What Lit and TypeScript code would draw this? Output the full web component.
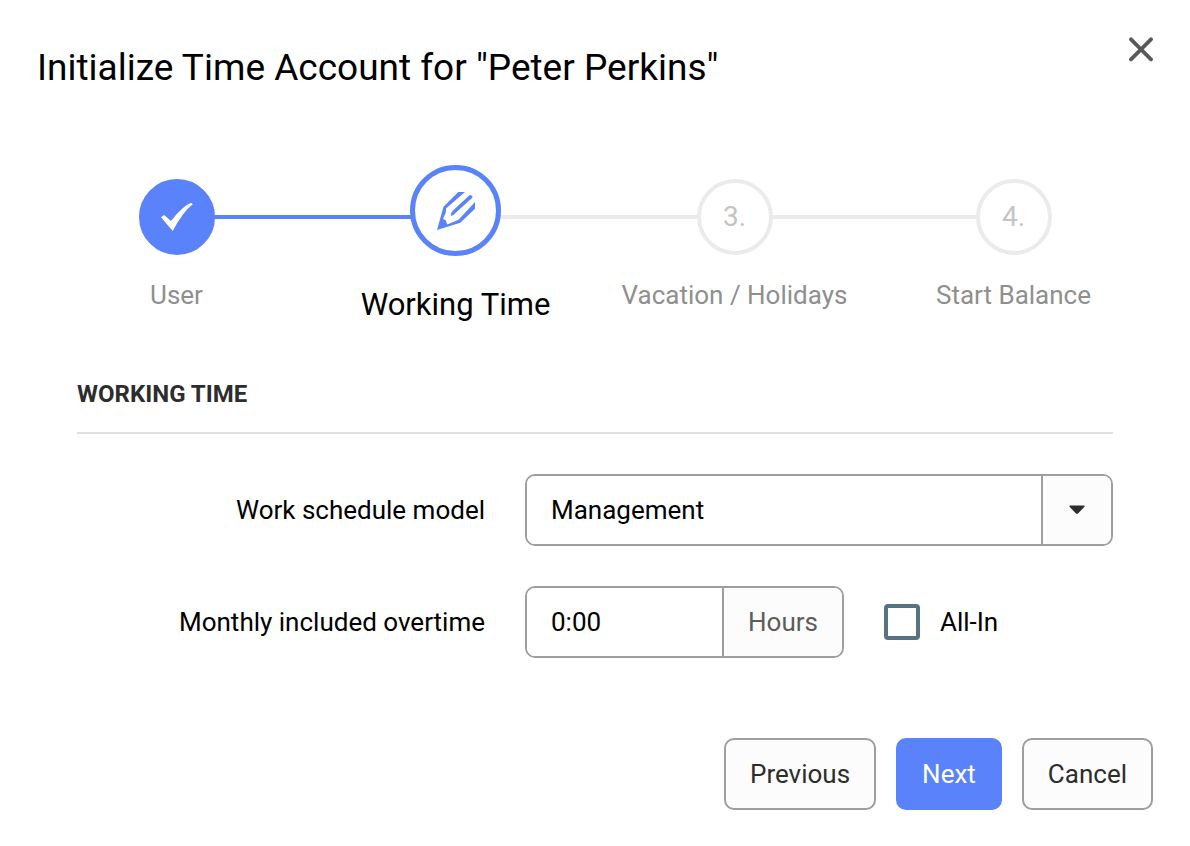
import { LitElement, html, css, svg, nothing } from "lit";
import { customElement, property, state } from "lit/decorators.js";
import { classMap } from "lit/directives/class-map.js";

type StepState = "done" | "active" | "open";

interface Step {
  label: string;
  state: StepState;
}

const checkIcon = svg`
  <path d="M0 14.300 L3 12 L10 18 Q15 11 22 5 Q28 0 30.500 0 L31.800 1.200 Q27 5 22.300 11 Q17 18 11.700 28 Z" fill="currentColor"></path>
`;

const pencilIcon = svg`
  <path fill="currentColor"
    d="M0 38 L6.500 14.700 L21.300 0 L28 0 L9.200 16.300 L8.700 20.700 L6 27 L8.700 28.300 L10.300 32.500 L21.500 27.800 L38 10 L38 16.700 L23.300 30.700 Z"></path>
  <path fill="currentColor"
    d="M32.700 3 L35.300 3.700 L35.300 5.700 L16.300 23 L14 24 L14 21.300 L16.300 18.300 Z"></path>
`;

@customElement("step-progress")
export class StepProgress extends LitElement {
  @property({ attribute: false }) steps: Step[] = [];

  static styles = css`
    :host {
      display: block;
    }
    .steps {
      display: grid;
      grid-auto-flow: column;
      grid-auto-columns: minmax(0, 1fr);
      margin: 0;
      padding: 0;
      list-style: none;
    }
    .head {
      display: flex;
      align-items: flex-end;
      height: 92px;
    }
    .line {
      flex: 1;
      height: 4px;
      margin: 0 -2px 38px 0;
      background: #ebebeb;
    }
    .line.after {
      margin: 0 0 38px -2px;
    }
    .line.reached {
      background: #5a82fa;
    }
    .line.hidden {
      visibility: hidden;
    }
    .marker {
      position: relative;
      display: flex;
      align-items: center;
      justify-content: center;
      box-sizing: border-box;
      width: 76px;
      height: 76px;
      margin-bottom: 2px;
      border: 4px solid #ebebeb;
      border-radius: 50%;
      background: #fff;
      color: #c4c4c4;
      font-size: 28px;
    }
    .done .marker {
      border-color: #5a82fa;
      background: #5a82fa;
      color: #fff;
    }
    .active .marker {
      width: 91px;
      height: 91px;
      margin-bottom: 1px;
      border-width: 5px;
      border-color: #5a82fa;
      color: #5a82fa;
    }
    .label {
      margin-top: 22px;
      color: #8f8f8f;
      font-size: 26px;
      line-height: 32px;
      text-align: center;
    }
    .active .label {
      margin-top: 29px;
      color: #000;
      font-size: 31px;
      line-height: 38px;
    }
  `;

  private marker(step: Step, index: number) {
    if (step.state === "done") {
      return html`<svg width="32" height="28" viewBox="0 0 32 28" aria-hidden="true">${checkIcon}</svg>`;
    }
    if (step.state === "active") {
      return html`<svg width="38" height="38" viewBox="0 0 38 38" aria-hidden="true">${pencilIcon}</svg>`;
    }
    return `${index + 1}.`;
  }

  render() {
    const last = this.steps.length - 1;
    return html`
      <ol class="steps">
        ${this.steps.map(
          (step, i) => html`
            <li
              class=${classMap({ [step.state]: true })}
              aria-current=${step.state === "active" ? "step" : nothing}
            >
              <div class="head">
                <span class=${classMap({ line: true, hidden: i === 0, reached: step.state !== "open" })}></span>
                <span class="marker">${this.marker(step, i)}</span>
                <span class=${classMap({ line: true, after: true, hidden: i === last, reached: step.state === "done" })}></span>
              </div>
              <div class="label">${step.label}</div>
            </li>
          `
        )}
      </ol>
    `;
  }
}

@customElement("app-root")
export class AppRoot extends LitElement {
  @state() private steps: Step[] = [
    { label: "User", state: "done" },
    { label: "Working Time", state: "active" },
    { label: "Vacation / Holidays", state: "open" },
    { label: "Start Balance", state: "open" },
  ];

  static styles = css`
    :host {
      display: block;
      color: #000;
      background: #fff;
      font-family: Roboto, "Liberation Sans", sans-serif;
      font-size: 26px;
      line-height: 32px;
    }
    .dialog {
      padding: 36px 37px;
    }
    .header {
      display: flex;
      align-items: flex-start;
      justify-content: space-between;
      margin-bottom: 73px;
    }
    .title {
      margin: 8px 0 0;
      font-size: 37px;
      font-weight: 400;
      line-height: 48px;
    }
    .close {
      display: flex;
      padding: 0;
      border: 0;
      background: none;
      color: #595959;
    }
    .section {
      margin: 54px 40px 0;
    }
    .section-title {
      margin: 0 0 40px;
      padding-bottom: 22px;
      border-bottom: 2px solid #e0e0e0;
      color: #2d2d2d;
      font-size: 24px;
      font-weight: 700;
    }
    .form {
      display: grid;
      grid-template-columns: 34fr 49fr;
      gap: 40px;
      align-items: center;
    }
    .field-label {
      text-align: right;
    }
    .field-row {
      display: flex;
      align-items: center;
      gap: 40px;
    }
    .control {
      box-sizing: border-box;
      height: 72px;
      border: 2px solid #9e9e9e;
      border-radius: 10px;
      overflow: hidden;
    }
    .dropdown {
      display: grid;
    }
    .select,
    .arrow {
      grid-area: 1 / 1;
    }
    .select,
    .input {
      min-width: 0;
      padding: 0 24px;
      border: 0;
      outline: 0;
      background: #fff;
      color: inherit;
      font: inherit;
      appearance: none;
    }
    .arrow {
      display: flex;
      align-items: center;
      justify-content: center;
      justify-self: end;
      width: 68px;
      border-left: 2px solid #9e9e9e;
      background: #fcfcfc;
      color: #2d2d2d;
      pointer-events: none;
    }
    .duration {
      display: flex;
    }
    .input {
      width: 147px;
    }
    .unit {
      display: flex;
      align-items: center;
      padding: 0 24px;
      border-left: 2px solid #9e9e9e;
      background: #fcfcfc;
      color: #5c5c5c;
    }
    .check {
      display: flex;
      align-items: center;
      gap: 20px;
    }
    .checkbox {
      box-sizing: border-box;
      width: 36px;
      height: 36px;
      margin: 0;
      border: 4px solid #577383;
      border-radius: 4px;
      background: #fff;
      appearance: none;
    }
    .checkbox:checked {
      background: #577383;
    }
    .footer {
      display: flex;
      justify-content: flex-end;
      gap: 20px;
      margin-top: 80px;
    }
    .button {
      height: 72px;
      padding: 0 24px;
      border: 2px solid #9e9e9e;
      border-radius: 10px;
      background: #fcfcfc;
      color: #2d2d2d;
      font: inherit;
    }
    .button.primary {
      border-color: #5a82fa;
      background: #5a82fa;
      color: #fff;
    }
  `;

  render() {
    return html`
      <main class="dialog" role="dialog" aria-labelledby="title">
        <header class="header">
          <h1 class="title" id="title">Initialize Time Account for "Peter Perkins"</h1>
          <button class="close" type="button" aria-label="Close">
            <svg width="25" height="26" viewBox="0 0 25 26" aria-hidden="true">
              <path d="M3 3.300 L23 23.300 M23 3.300 L3 23.300" stroke="currentColor" stroke-width="3.800" stroke-linecap="round"></path>
            </svg>
          </button>
        </header>

        <step-progress .steps=${this.steps}></step-progress>

        <section class="section">
          <h2 class="section-title">WORKING TIME</h2>
          <div class="form">
            <label class="field-label" for="model">Work schedule model</label>
            <div class="control dropdown">
              <select class="select" id="model">
                <option>Management</option>
              </select>
              <span class="arrow">
                <svg width="16" height="10" viewBox="0 0 16 10" aria-hidden="true">
                  <path d="M1 0.500 H15 Q16 1 15.300 2 L9 8.500 Q8 9.300 7 8.500 L0.700 2 Q0 1 1 0.500 Z" fill="currentColor"></path>
                </svg>
              </span>
            </div>

            <label class="field-label" for="overtime">Monthly included overtime</label>
            <div class="field-row">
              <div class="control duration">
                <input class="input" id="overtime" type="text" value="0:00" />
                <span class="unit">Hours</span>
              </div>
              <label class="check">
                <input class="checkbox" type="checkbox" />
                All-In
              </label>
            </div>
          </div>
        </section>

        <footer class="footer">
          <button class="button" type="button">Previous</button>
          <button class="button primary" type="button">Next</button>
          <button class="button" type="button">Cancel</button>
        </footer>
      </main>
    `;
  }
}
